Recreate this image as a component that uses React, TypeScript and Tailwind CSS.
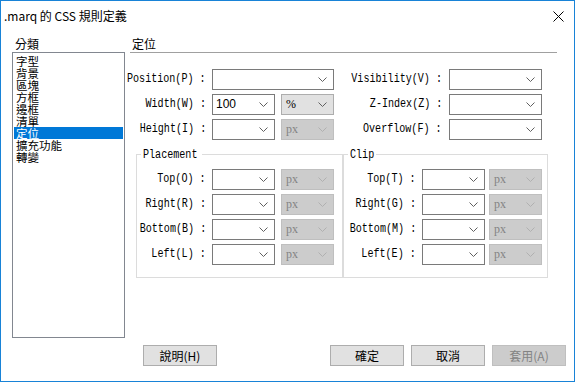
import React from "react";

type Variant = "normal" | "gray" | "disabled";

function Chevron({ color }: { color: string }) {
  return (
    <svg width="9" height="5" viewBox="0 0 9 5" className="shrink-0">
      <path d="M0.5 0.5 L4.5 4.5 L8.5 0.5" fill="none" stroke={color} strokeWidth="1" />
    </svg>
  );
}

function Combo({ w, value, variant = "normal" }: { w: string; value?: string; variant?: Variant }) {
  const cls =
    variant === "normal"
      ? "border-[#7a7a7a] bg-white text-black font-['Liberation_Sans',sans-serif]"
      : variant === "gray"
      ? "border-[#adadad] bg-[#e1e1e1] text-black font-['Liberation_Serif',serif]"
      : "border-[#bfbfbf] bg-[#cccccc] text-[#838383] font-['Liberation_Serif',serif]";
  const pad = variant === "normal" ? "pl-[3px]" : "pl-[4px]";
  return (
    <div className={`${w} h-[21px] shrink-0 border ${cls} ${pad} pr-[6px] flex items-center justify-between text-[12px] leading-[19px]`}>
      <span>{value ?? ""}</span>
      <Chevron color={variant === "disabled" ? "#b0b0b0" : "#606060"} />
    </div>
  );
}

function Label({ w, children }: { w: string; children: React.ReactNode }) {
  return (
    <div className={`${w} shrink-0 flex justify-end`}>
      <span className="inline-block origin-right scale-x-[0.84] whitespace-pre text-[12px] leading-[21px] font-['Liberation_Mono',monospace]">
        {children}
      </span>
    </div>
  );
}

function Btn({ children, disabled }: { children: React.ReactNode; disabled?: boolean }) {
  return (
    <div
      className={`w-[74px] h-[21px] border flex items-center justify-center text-[12px] leading-[19px] ${
        disabled ? "border-[#bfbfbf] bg-[#cccccc] text-[#838383]" : "border-[#adadad] bg-[#e1e1e1] text-black"
      }`}
    >
      {children}
    </div>
  );
}

const categories = ["字型", "背景", "區塊", "方框", "邊框", "清單", "定位", "擴充功能", "轉變"];

export default function App() {
  return (
    <div className="w-[575px] h-[382px] border border-[#1883d7] bg-white flex flex-col overflow-hidden text-[12px] text-black font-['Noto_Sans_CJK_TC','Noto_Sans',sans-serif]">
      {/* Title bar */}
      <div className="h-[30px] shrink-0 flex items-center justify-between pl-[3px] pr-[10px]">
        <span className="text-[12px] leading-[16px]">.marq 的 CSS 規則定義</span>
        <svg width="11" height="11" viewBox="0 0 11 11">
          <path d="M0.5 0.5 L10.5 10.5 M10.5 0.5 L0.5 10.5" stroke="#000" strokeWidth="1" />
        </svg>
      </div>

      {/* Main */}
      <div className="flex pl-[11px] pt-[5px]">
        {/* Left column */}
        <div className="w-[113px] shrink-0 flex flex-col">
          <div className="h-[16px] leading-[16px] pl-[3px]">分類</div>
          <div className="h-[286px] border border-[#828790] pt-[2px] px-[1px] flex flex-col">
            {categories.map((c) => (
              <div
                key={c}
                className={`h-[12px] leading-[12px] text-[11.5px] pl-[2px] whitespace-nowrap ${
                  c === "定位" ? "bg-[#0078d7] text-white" : ""
                }`}
              >
                {c}
              </div>
            ))}
          </div>
        </div>

        {/* Right column */}
        <div className="ml-[5px] w-[427px] shrink-0 flex flex-col">
          <div className="h-[17px] leading-[16px] pl-[2px] border-b border-[#a0a0a0]">定位</div>

          <div className="mt-[16px] flex flex-col gap-[4px]">
            <div className="flex items-center">
              <Label w="w-[76px]">Position(P) :</Label>
              <div className="ml-[6px]"><Combo w="w-[122px]" /></div>
              <Label w="w-[108px]">Visibility(V) :</Label>
              <div className="ml-[7px]"><Combo w="w-[93px]" /></div>
            </div>
            <div className="flex items-center">
              <Label w="w-[76px]">Width(W) :</Label>
              <div className="ml-[6px]"><Combo w="w-[63px]" value="100" /></div>
              <div className="ml-[6px]"><Combo w="w-[53px]" value="%" variant="gray" /></div>
              <Label w="w-[108px]">Z-Index(Z) :</Label>
              <div className="ml-[7px]"><Combo w="w-[93px]" /></div>
            </div>
            <div className="flex items-center">
              <Label w="w-[76px]">Height(I) :</Label>
              <div className="ml-[6px]"><Combo w="w-[63px]" /></div>
              <div className="ml-[6px]"><Combo w="w-[53px]" value="px" variant="disabled" /></div>
              <Label w="w-[108px]">Overflow(F) :</Label>
              <div className="ml-[7px]"><Combo w="w-[93px]" /></div>
            </div>
          </div>

          <div className="mt-[6px] ml-[6px] flex">
            <fieldset className="w-[207px] h-[132px] border border-[#dcdcdc]">
              <legend className="ml-[4px] w-[61px] px-[2px] leading-[14px] overflow-visible">
                <span className="inline-block origin-left scale-x-[0.84] whitespace-pre text-[12px] font-['Liberation_Mono',monospace]">Placement</span>
              </legend>
              <div className="pt-[7px] flex flex-col gap-[4px]">
                {["Top(O) :", "Right(R) :", "Bottom(B) :", "Left(L) :"].map((l) => (
                  <div key={l} className="flex items-center">
                    <Label w="w-[69px]">{l}</Label>
                    <div className="ml-[6px]"><Combo w="w-[63px]" /></div>
                    <div className="ml-[6px]"><Combo w="w-[53px]" value="px" variant="disabled" /></div>
                  </div>
                ))}
              </div>
            </fieldset>
            <fieldset className="w-[205px] h-[132px] border border-[#dcdcdc]">
              <legend className="ml-[4px] w-[28px] px-[2px] leading-[14px] overflow-visible">
                <span className="inline-block origin-left scale-x-[0.84] whitespace-pre text-[12px] font-['Liberation_Mono',monospace]">Clip</span>
              </legend>
              <div className="pt-[7px] flex flex-col gap-[4px]">
                {["Top(T) :", "Right(G) :", "Bottom(M) :", "Left(E) :"].map((l) => (
                  <div key={l} className="flex items-center">
                    <Label w="w-[72px]">{l}</Label>
                    <div className="ml-[6px]"><Combo w="w-[63px]" /></div>
                    <div className="ml-[4px]"><Combo w="w-[53px]" value="px" variant="disabled" /></div>
                  </div>
                ))}
              </div>
            </fieldset>
          </div>
        </div>
      </div>

      {/* Buttons */}
      <div className="mt-[7px] flex pl-[142px] pr-[8px]">
        <Btn>說明(H)</Btn>
        <div className="ml-auto flex gap-[7px]">
          <Btn>確定</Btn>
          <Btn>取消</Btn>
          <Btn disabled>套用(A)</Btn>
        </div>
      </div>
    </div>
  );
}
